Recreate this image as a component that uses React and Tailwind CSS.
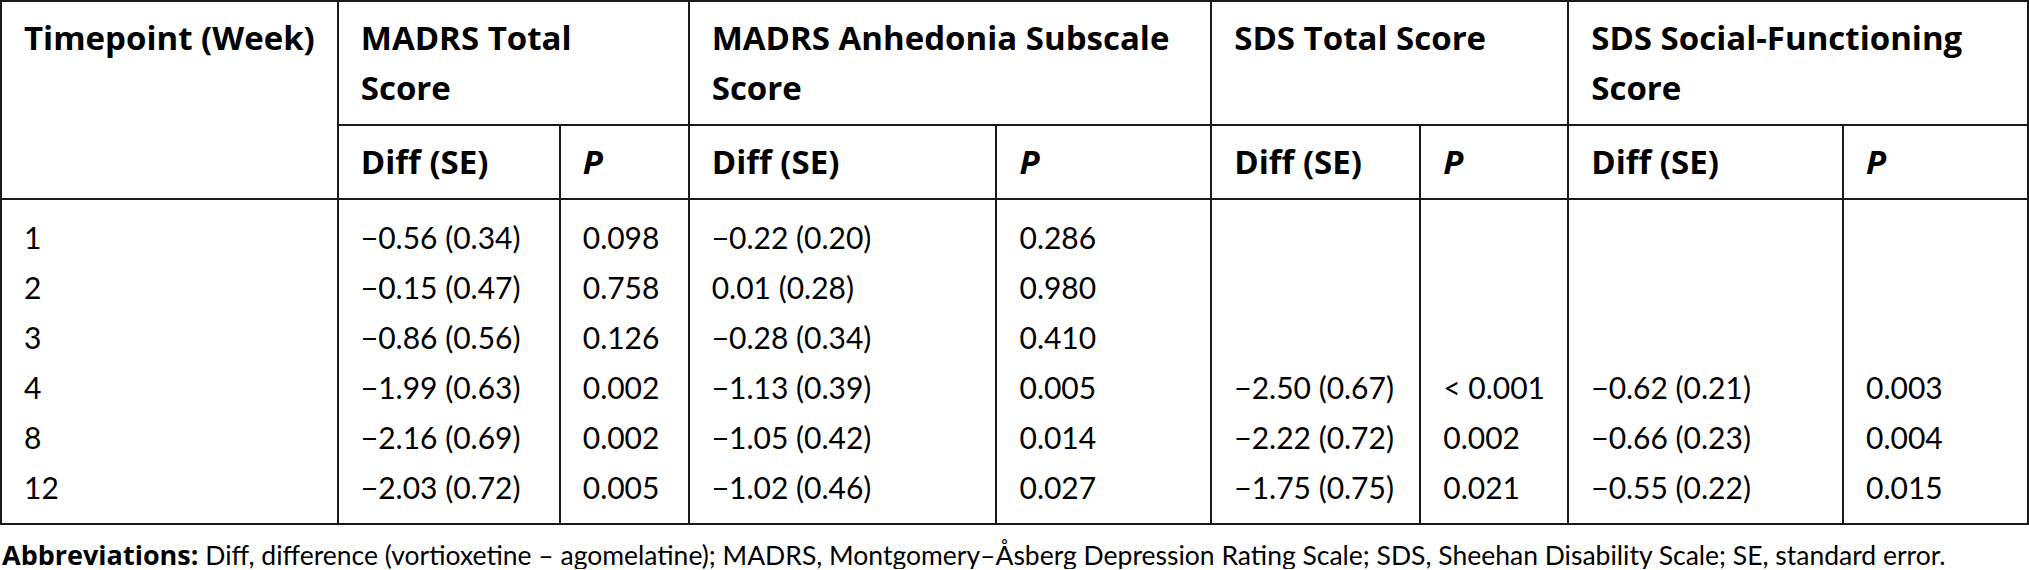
import { Fragment } from 'react';

const rows = [
  ['1', '−0.56 (0.34)', '0.098', '−0.22 (0.20)', '0.286', '', '', '', ''],
  ['2', '−0.15 (0.47)', '0.758', '0.01 (0.28)', '0.980', '', '', '', ''],
  ['3', '−0.86 (0.56)', '0.126', '−0.28 (0.34)', '0.410', '', '', '', ''],
  ['4', '−1.99 (0.63)', '0.002', '−1.13 (0.39)', '0.005', '−2.50 (0.67)', '< 0.001', '−0.62 (0.21)', '0.003'],
  ['8', '−2.16 (0.69)', '0.002', '−1.05 (0.42)', '0.014', '−2.22 (0.72)', '0.002', '−0.66 (0.23)', '0.004'],
  ['12', '−2.03 (0.72)', '0.005', '−1.02 (0.46)', '0.027', '−1.75 (0.75)', '0.021', '−0.55 (0.22)', '0.015'],
];

const groups = ['MADRS Total Score', 'MADRS Anhedonia Subscale Score', 'SDS Total Score', 'SDS Social-Functioning Score'];

export default function App() {
  const head = "border-2 border-[#1a1a1a] px-[22px] pt-[11px] text-left align-top font-['Open_Sans',sans-serif] text-[33px] font-bold leading-[50px] text-black";
  const sub = "h-[74px] border-2 border-[#1a1a1a] px-[22px] text-left align-middle font-['Open_Sans',sans-serif] text-[33px] font-bold leading-[50px] text-black";
  return (
    <div className="w-[2029px] bg-white">
      <table className="table-fixed border-collapse border-2 border-[#1a1a1a]">
        <colgroup>
          <col className="w-[335px]" />
          <col className="w-[222px]" />
          <col className="w-[129px]" />
          <col className="w-[308px]" />
          <col className="w-[215px]" />
          <col className="w-[209px]" />
          <col className="w-[148px]" />
          <col className="w-[275px]" />
          <col className="w-[185px]" />
        </colgroup>
        <thead>
          <tr className="h-[124px]">
            <th rowSpan={2} className={head + ' whitespace-nowrap'}>Timepoint (Week)</th>
            {groups.map((g) => (
              <th key={g} colSpan={2} className={head}>{g}</th>
            ))}
          </tr>
          <tr>
            {groups.map((g) => (
              <Fragment key={g}>
                <th className={sub}>Diff (SE)</th>
                <th className={sub}><i>P</i></th>
              </Fragment>
            ))}
          </tr>
        </thead>
        <tbody className="font-['Lato',sans-serif] text-[30px] leading-[50px] text-black">
          {rows.map((r, i) => (
            <tr key={i}>
              {r.map((c, j) => (
                <td
                  key={j}
                  className={`border-x-2 border-[#1a1a1a] px-[22px] whitespace-nowrap ${i === 0 ? 'pt-[12px]' : ''} ${i === rows.length - 1 ? 'pb-[11px]' : ''}`}
                >
                  {c}
                </td>
              ))}
            </tr>
          ))}
        </tbody>
      </table>
      <p className="mt-[16px] pl-[2px] whitespace-nowrap font-['Lato',sans-serif] text-[26.5px] leading-[28px] text-black">
        <b className="font-['Open_Sans',sans-serif] text-[27px] font-bold leading-none">Abbreviations:</b> Diff, difference (vortioxetine – agomelatine); MADRS, Montgomery–Åsberg Depression Rating Scale; SDS, Sheehan Disability Scale; SE, standard error.
      </p>
    </div>
  );
}
